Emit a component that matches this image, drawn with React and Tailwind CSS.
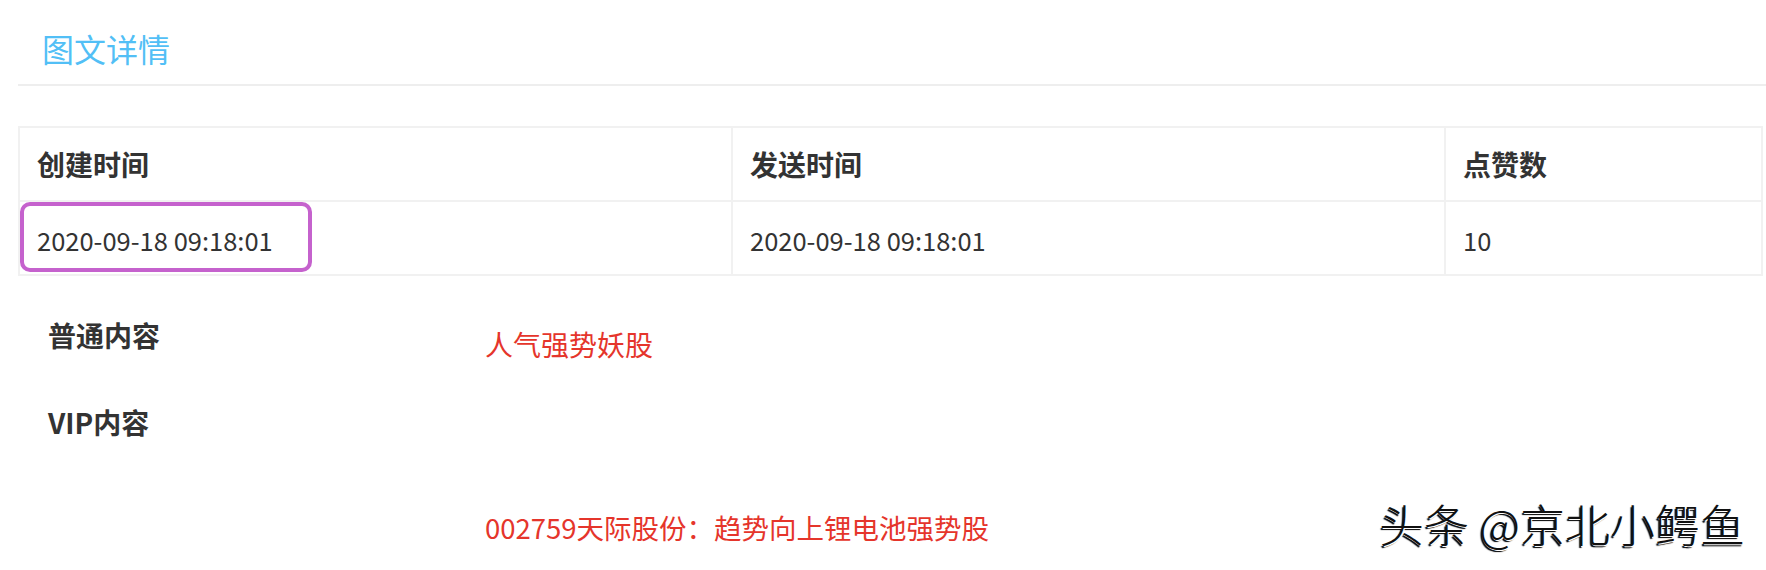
import React from "react";

const font = { fontFamily: '"Noto Sans CJK SC", "Noto Sans", sans-serif' };

const columns = ["创建时间", "发送时间", "点赞数"];
const row = ["2020-09-18 09:18:01", "2020-09-18 09:18:01", "10"];

const App = () => {
  return (
    <div
      className="relative w-[1766px] h-[570px] bg-white overflow-hidden text-[#333]"
      style={font}
    >
      {/* Title */}
      <div className="ml-[18px] border-b-2 border-[#eeeeee] pt-[28px] pb-[16px] pl-[24px]">
        <h2 className="text-[32px] leading-[40px] text-[#52bff6] font-normal">
          图文详情
        </h2>
      </div>

      {/* Table */}
      <div className="ml-[18px] mr-[3px] mt-[40px] border-2 border-[#f1f1f1] grid grid-cols-[713px_713px_1fr]">
        {columns.map((col, i) => (
          <div
            key={col}
            className={`h-[74px] flex items-center pl-[17px] border-b-2 border-[#f1f1f1] text-[28px] font-bold ${i < 2 ? "border-r-2" : ""}`}
          >
            {col}
          </div>
        ))}
        {row.map((val, i) => (
          <div
            key={i}
            className={`relative h-[72px] flex items-center pl-[17px] pt-[4px] border-[#f1f1f1] text-[25.5px] ${i < 2 ? "border-r-2" : ""}`}
          >
            {val}
            {i === 0 && (
              <div className="absolute left-0 top-[0px] w-[292px] h-[70px] border-[4px] border-[#c562cd] rounded-[10px]" />
            )}
          </div>
        ))}
      </div>

      {/* Content */}
      <div className="pl-[48px] mt-[39px]">
        <div className="flex">
          <div className="w-[437px] text-[28px] leading-[40px] font-bold">
            普通内容
          </div>
          <div className="mt-[9px] text-[28px] leading-[40px] text-[#e5352b]">
            人气强势妖股
          </div>
        </div>
        <div className="flex mt-[38px]">
          <div className="w-[437px] text-[28px] leading-[40px] font-bold">
            VIP内容
          </div>
          <div className="pt-[105px] text-[27.5px] leading-[40px] text-[#e5352b]">
            002759天际股份：趋势向上锂电池强势股
          </div>
        </div>
      </div>

      {/* Watermark */}
      <div
        className="absolute right-[21px] top-[494px] text-[45px] leading-[60px] font-light text-[#111]"
        style={{ textShadow: "1px 1px 0 #fff, -1px 2px 1px #000" }}
      >
        头条 @京北小鳄鱼
      </div>
    </div>
  );
};

export default App;
